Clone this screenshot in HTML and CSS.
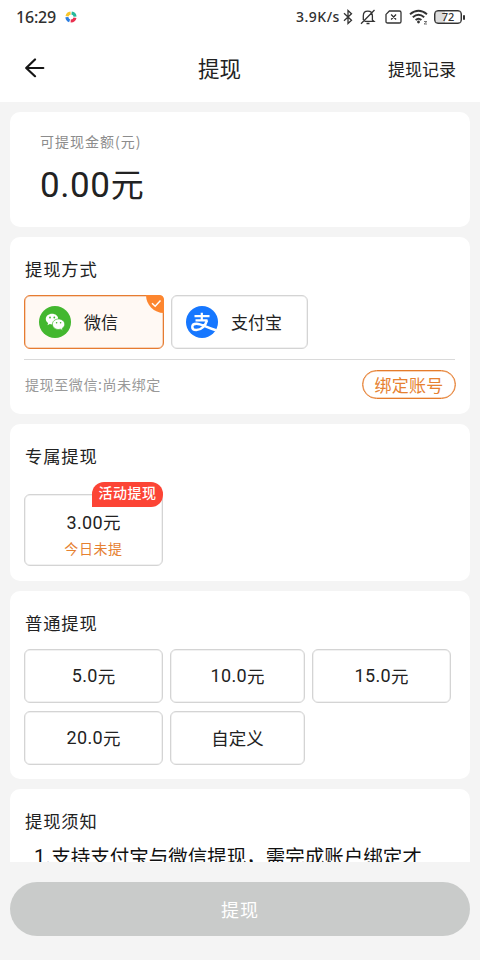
FILE: index.html
```html
<!DOCTYPE html>
<html lang="zh-CN">
<head>
<meta charset="utf-8">
<title>提现</title>
<link rel="stylesheet" href="styles.css">
</head>
<body>
<div class="screen">
  <header class="top">
    <div class="status">
      <span class="time">16:29</span>
      <svg class="app-dot" width="12" height="12" viewBox="0 0 12 12" fill="none" stroke-width="3">
        <path d="M2 5.2A4.2 4.2 0 0 1 5.6 1.9" stroke="#f8c62c"/>
        <path d="M6.6 1.9A4.2 4.2 0 0 1 10.1 5.6" stroke="#26b99a"/>
        <path d="M10 6.8A4.2 4.2 0 0 1 5.7 10.1" stroke="#e9304f"/>
        <path d="M4.6 9.9A4.2 4.2 0 0 1 1.9 6.2" stroke="#2b7de0"/>
      </svg>
      <span class="speed">3.9K/s</span>
      <svg class="bt" width="10" height="16" viewBox="0 0 10 16" fill="none" stroke="#333" stroke-width="1.3"><path d="M1 4.2 8.5 11.3 5 14.5V1.5L8.5 4.7 1 11.8"/></svg>
      <svg class="bell" width="16" height="16" viewBox="0 0 16 16" fill="none" stroke="#333" stroke-width="1.3"><path d="M3.3 11V7C3.3 4 5 2.2 7.8 2.2S12.4 4 12.4 7v4l1.5 1.3H4.5M6.5 14.5h3M14.5 1 1 14.7"/></svg>
      <svg class="sim" width="17" height="14" viewBox="0 0 17 14" fill="none" stroke="#333" stroke-width="1.3"><path d="M4.4 1H14.4Q16 1 16 2.6V11.4Q16 13 14.4 13H2.6Q1 13 1 11.4V4.4ZM6.1 4.5 11.1 9.5M11.1 4.5 6.1 9.5"/></svg>
      <svg class="wifi" width="20" height="16" viewBox="0 0 20 16" fill="none" stroke="#333" stroke-width="1.9"><path d="M1 5.3Q9.5-1.7 18 5.3M3.8 8.3Q9.5 3.4 15.2 8.3M6.6 11Q9.5 8.5 12.4 11"/><circle cx="9.5" cy="13" r="1.4" fill="#333" stroke="none"/><path d="M15 12.5h3l-3 2.5h3" stroke="#777" stroke-width="1"/></svg>
      <span class="battery"><span class="cell">72</span><i class="tip"></i></span>
    </div>
    <nav class="nav">
      <svg class="back" width="20" height="20" viewBox="0 0 20 20" fill="none" stroke="#151515" stroke-width="2.2" stroke-linecap="round" stroke-linejoin="round"><path d="M18.3 10H1.2M10 1.5 1.2 10l8.8 8.2"/></svg>
      <h1>提现</h1>
      <span class="record">提现记录</span>
    </nav>
  </header>

  <main class="content">
    <section class="card balance">
      <p class="label">可提现金额(元)</p>
      <p class="sum"><span class="num">0.00</span>元</p>
    </section>

    <section class="card">
      <h2>提现方式</h2>
      <div class="methods">
        <div class="method selected">
          <svg width="32" height="32" viewBox="0 0 32 32"><circle cx="16" cy="16" r="16" fill="#43b72f"/><path d="M13 7.8c-3.5 0-6.2 2.3-6.2 5.2 0 1.7.9 3.1 2.3 4.1l-.6 2.1 2.3-1.1c.7.2 1.4.3 2.2.3 3.5 0 6.2-2.4 6.2-5.4s-2.7-5.2-6.2-5.2z" fill="#fff"/><path d="M19.6 13c-3.5 0-6.2 2.3-6.2 5.2s2.7 5.3 6.2 5.3c.7 0 1.3-.1 1.9-.3l2.2 1.2-.5-2c1.5-1 2.5-2.5 2.5-4.2 0-2.9-2.7-5.2-6.1-5.2z" fill="#fff" stroke="#43b72f" stroke-width=".7"/><g fill="#43b72f"><circle cx="11" cy="11.5" r=".9"/><circle cx="15.3" cy="11.5" r=".9"/><circle cx="17.6" cy="16.7" r=".8"/><circle cx="21.6" cy="16.7" r=".8"/></g></svg>
          <span>微信</span>
          <svg class="corner" width="18" height="18" viewBox="0 0 18 18"><path d="M0 0H13Q18 0 18 5V18C8 18 0 10 0 0Z" fill="#fd862f"/><path d="M6 8.3 9.2 11.2 14.5 5.5" fill="none" stroke="#fff" stroke-width="1.5"/></svg>
        </div>
        <div class="method">
          <svg width="32" height="32" viewBox="0 0 32 32" fill="none" stroke="#fff"><circle cx="16" cy="16" r="16" fill="#1677ff" stroke="none"/><path d="M8.5 10.2H23.5M15.8 6.8V14.3M9.5 14.3H21.5" stroke-width="2.2"/><path d="M21 14.3C19.500 19.500 15.500 24 10.300 24 7.500 24 6.300 22.600 6.300 20.900 6.300 19 8 17.700 10.500 17.700 15.500 17.700 20 21.600 30 24.200" stroke-width="2.5"/></svg>
          <span>支付宝</span>
        </div>
      </div>
      <div class="account">
        <span>提现至微信:尚未绑定</span>
        <span class="bind">绑定账号</span>
      </div>
    </section>

    <section class="card exclusive">
      <h2>专属提现</h2>
      <div class="offer">
        <span class="badge">活动提现</span>
        <span class="amount"><span class="num">3.00</span>元</span>
        <span class="today">今日未提</span>
      </div>
    </section>

    <section class="card regular">
      <h2>普通提现</h2>
      <div class="amounts">
        <div class="box"><span class="num">5.0</span>元</div>
        <div class="box"><span class="num">10.0</span>元</div>
        <div class="box"><span class="num">15.0</span>元</div>
        <div class="box"><span class="num">20.0</span>元</div>
        <div class="box">自定义</div>
      </div>
    </section>

    <section class="card notice">
      <h2>提现须知</h2>
      <p class="rule"><span class="num">1.</span>支持支付宝与微信提现，需完成账户绑定才</p>
    </section>
  </main>

  <footer class="bottom"><div class="submit">提现</div></footer>
</div>
</body>
</html>
```
FILE: styles.css
```css
* { box-sizing: border-box; }
body {
  margin: 0;
  background: #f4f4f4;
  color: #222;
  font-family: "Noto Sans CJK SC", sans-serif;
}
h1, h2, p { margin: 0; font-weight: 400; }
svg { display: block; flex: none; }
.num { font-family: Roboto, "Noto Sans CJK SC", sans-serif; letter-spacing: .3px; }

.screen { width: 480px; height: 960px; display: flex; flex-direction: column; overflow: hidden; }
.top { height: 102px; flex: none; background: #fff; }
.status { height: 34px; padding: 0 15px 0 16px; display: flex; align-items: center; color: #303030; }
.time { width: 41px; font: 500 16px/34px "Noto Sans", sans-serif; letter-spacing: -.2px; white-space: nowrap; }
.app-dot { margin-left: 8px; }
.speed { margin-left: auto; width: 43px; font: 500 14px/34px "Noto Sans", sans-serif; letter-spacing: .5px; white-space: nowrap; }
.bt { margin-left: 4px; }
.bell { margin-left: 7px; }
.sim { margin-left: 9px; }
.wifi { margin-left: 7px; }
.battery { margin-left: 5px; display: flex; align-items: center; gap: 1px; }
.cell {
  width: 28px; height: 14px;
  border: 1px solid #333; border-radius: 4px; box-shadow: inset 0 0 0 .5px #444;
  background: linear-gradient(90deg, #ddd 40%, #fff 40%);
  font: 500 11px/12px "Noto Sans", sans-serif; text-align: center;
}
.tip { width: 2px; height: 5px; border-radius: 1px; background: #333; }

.nav { height: 68px; padding: 0 24px; display: grid; grid-template-columns: 174px 1fr auto; align-items: center; }
.back { margin-left: 1px; }
.nav h1 { font-size: 21.5px; line-height: 66px; }
.record { font-size: 17px; }

.content { flex: none; height: 760px; padding: 10px 10px 0; display: flex; flex-direction: column; gap: 10px; overflow: hidden; }
.card { flex: none; padding: 20px 15px 15px; border-radius: 10px; background: #fff; }
.card h2 { font-size: 17.3px; line-height: 24px; letter-spacing: .9px; }

.balance { height: 115px; padding: 19px 30px; }
.label { font-size: 14px; line-height: 20px; letter-spacing: 1px; color: #8c8c8c; }
.sum { margin-top: 10px; font-size: 33px; line-height: 44px; }
.sum .num { font-size: 35px; letter-spacing: .6px; }

.methods { display: flex; gap: 7px; margin: 14px 0 0 -1px; }
.method {
  position: relative; width: 137px; height: 54px; padding-left: 14px;
  display: flex; align-items: center; gap: 13px;
  border: 1px solid #d4d4d4; box-shadow: inset 0 0 0 .5px #e4e4e4; border-radius: 6px; font-size: 17px;
}
.method > span { line-height: 24px; padding-bottom: 1px; }
.selected { width: 140px; border-color: #e67c31; box-shadow: inset 0 0 0 .5px #f0ad80; background: #fff9f4; }
.corner { position: absolute; top: -1px; right: -1px; }
.account {
  margin: 10px 0 0 -1px; height: 40px; padding-top: 10px;
  border-top: 1px solid #dadada;
  display: flex; align-items: center; justify-content: space-between;
  font-size: 14px; letter-spacing: .6px; color: #999; white-space: nowrap;
}
.account > span:first-child { padding: 0 0 2px 1px; }
.bind {
  width: 94px; height: 29px; margin-right: -1px;
  border: 1px solid #e57c2c; box-shadow: inset 0 0 0 .5px #efa773; border-radius: 15px;
  color: #e68131; font-size: 17px; line-height: 27px; letter-spacing: .2px; text-align: center;
}

.exclusive { height: 157px; }
.offer {
  position: relative; width: 139px; height: 72px; margin: 26px 0 0 -1px; padding-top: 14px;
  border: 1px solid #d4d4d4; box-shadow: inset 0 0 0 .5px #e4e4e4; border-radius: 6px;
  display: flex; flex-direction: column; align-items: center;
}
.amount { font-size: 17.5px; line-height: 26px; }
.amount .num, .box .num { font-size: 18px; }
.today { margin-top: 2px; font-size: 14px; line-height: 20px; letter-spacing: .6px; color: #e68131; }
.badge {
  position: absolute; top: -13px; right: -1px; width: 71px; height: 25px;
  border-radius: 12px 12px 12px 0; background: #fc4435; color: #fff;
  font-size: 14px; line-height: 21px; letter-spacing: .5px; font-weight: 500; text-align: center;
}

.regular { height: 188px; }
.amounts { display: grid; grid-template-columns: 139px 135px 139px; grid-auto-rows: 54px; gap: 7.5px 7px; margin: 14px 0 0 -1px; }
.box {
  display: flex; align-items: center; justify-content: center;
  border: 1px solid #d4d4d4; box-shadow: inset 0 0 0 .5px #e4e4e4; border-radius: 6px; font-size: 17.5px; line-height: 26px;
}
.notice { height: 200px; }
.rule { margin-top: 9px; padding-left: 9px; font-size: 19.5px; line-height: 28px; white-space: nowrap; color: #111; }
.rule .num { font-size: 20px; }

.bottom { flex: 1; padding: 20px 10px 0; }
.submit { height: 54px; border-radius: 27px; background: #c9cbca; color: #fff; font-size: 18px; line-height: 54px; letter-spacing: 1px; text-align: center; }
```
